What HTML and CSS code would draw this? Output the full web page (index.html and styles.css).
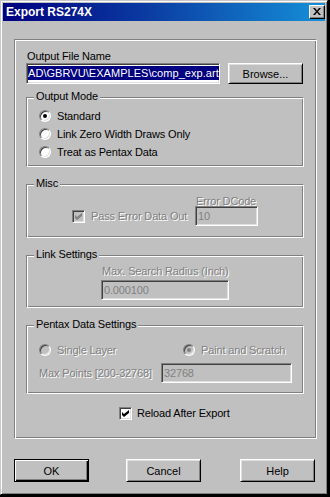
FILE: index.html
```html
<!DOCTYPE html>
<html>
<head>
<meta charset="utf-8">
<link rel="stylesheet" href="styles.css">
</head>
<body>
<div class="window">
  <div class="titlebar">
    <span class="title">Export RS274X</span>
    <span class="close"><svg width="8" height="7" viewBox="0 0 8 7"><path d="M0 0h2l2 2.4 2-2.4h2l-3 3.5 3 3.5h-2l-2-2.4-2 2.4h-2l3-3.5z" fill="#000"/></svg></span>
  </div>
  <div class="etched main">
    <div class="field-label">Output File Name</div>
    <div class="file-row">
      <div class="edit file"><span class="sel">AD\GBRVU\EXAMPLES\comp_exp.art</span></div>
      <div class="btn browse">Browse...</div>
    </div>

    <div class="etched group mode">
      <span class="legend">Output Mode</span>
      <div class="radio-row"><span class="radio checked"></span><span>Standard</span></div>
      <div class="radio-row"><span class="radio"></span><span>Link Zero Width Draws Only</span></div>
      <div class="radio-row"><span class="radio"></span><span>Treat as Pentax Data</span></div>
    </div>

    <div class="etched group misc">
      <span class="legend">Misc</span>
      <div class="misc-row">
        <div class="check-item">
          <span class="check disabled"><svg width="7" height="7" viewBox="0 0 7 7"><path d="M0 2l2 2 5-4v3l-5 4-2-2z" fill="#808080"/></svg></span>
          <span class="dis">Pass Error Data Out</span>
        </div>
        <div class="stack">
          <span class="dis stack-label">Error DCode</span>
          <div class="edit disabled dcode">10</div>
        </div>
      </div>
    </div>

    <div class="etched group link">
      <span class="legend">Link Settings</span>
      <div class="stack link-stack">
        <span class="dis stack-label radius-label">Max. Search Radius (Inch)</span>
        <div class="edit disabled radius">0.000100</div>
      </div>
    </div>

    <div class="etched group pentax">
      <span class="legend">Pentax Data Settings</span>
      <div class="pentax-radios">
        <div class="radio-item first"><span class="radio disabled"></span><span class="dis">Single Layer</span></div>
        <div class="radio-item"><span class="radio disabled checked"></span><span class="dis">Paint and Scratch</span></div>
      </div>
      <div class="points-row">
        <span class="dis points-label">Max Points [200-32768]</span>
        <div class="edit disabled points">32768</div>
      </div>
    </div>

    <div class="reload-row">
      <span class="check"><svg width="7" height="7" viewBox="0 0 7 7"><path d="M0 2l2 2 5-4v3l-5 4-2-2z" fill="#000"/></svg></span>
      <span>Reload After Export</span>
    </div>
  </div>

  <div class="buttons">
    <div class="btn default">OK</div>
    <div class="btn cancel">Cancel</div>
    <div class="btn help">Help</div>
  </div>
</div>
</body>
</html>
```

FILE: styles.css
```css
html, body {
  margin: 0;
  padding: 0;
  background: #000;
}

body {
  width: 330px;
  height: 497px;
  overflow: hidden;
  font-family: "Liberation Sans", Arial, sans-serif;
  font-size: 11px;
  letter-spacing: -0.15px;
  white-space: nowrap;
  color: #000;
}

.window {
  box-sizing: border-box;
  width: 328px;
  height: 495px;
  background: #c0c0c0;
  border: 1px solid;
  border-color: #c8c8c8 #000 #000 #c8c8c8;
  box-shadow: inset 1px 1px #fff, inset -1px -1px #808080;
  padding: 2px;
}

.titlebar {
  height: 18px;
  display: flex;
  align-items: center;
  background: linear-gradient(90deg, #000080 0%, #0b3ca2 45%, #1590d8 100%);
  padding-left: 3px;
}

.title {
  font-weight: bold;
  font-size: 12px;
  letter-spacing: 0;
  color: #fff;
  line-height: 14px;
}

.close {
  margin-left: auto;
  box-sizing: border-box;
  width: 16px;
  height: 14px;
  background: #c0c0c0;
  border: 1px solid;
  border-color: #fff #000 #000 #fff;
  box-shadow: inset -1px -1px #808080;
  display: flex;
  align-items: center;
  justify-content: center;
  padding: 0 1px 1px 0;
}

.close svg { display: block; }

.etched {
  box-sizing: border-box;
  border: 1px solid;
  border-color: #808080 #fff #fff #808080;
  box-shadow: inset 1px 1px #fff, inset -1px -1px #808080;
  position: relative;
}

.main {
  width: 303px;
  height: 400px;
  margin: 18px 0 0 11px;
  padding: 9px 0 0 11px;
}

.field-label {
  line-height: 14px;
  height: 14px;
  margin-left: 1px;
}

.file-row {
  display: flex;
  gap: 8px;
}

.edit {
  box-sizing: border-box;
  border: 1px solid;
  border-color: #808080 #fff #fff #808080;
  box-shadow: inset 1px 1px #404040, inset -1px -1px #dfdfdf;
  background: #fff;
  line-height: 14px;
  padding: 2px 0 0 2px;
  overflow: hidden;
}

.edit.disabled {
  background: #c0c0c0;
  color: #808080;
}

.file {
  width: 194px;
  height: 21px;
  padding: 2px 0 0 1px;
}

.sel {
  display: inline-block;
  background: #000080;
  color: #fff;
  height: 14px;
  line-height: 14px;
  letter-spacing: 0.05px;
  padding-right: 1px;
}

.btn {
  box-sizing: border-box;
  background: #c0c0c0;
  border: 1px solid;
  border-color: #fff #000 #000 #fff;
  box-shadow: inset 1px 1px #dfdfdf, inset -1px -1px #808080;
  display: flex;
  align-items: center;
  justify-content: center;
  line-height: 14px;
  letter-spacing: 0;
}

.browse {
  width: 75px;
  height: 21px;
}

.group {
  width: 278px;
}

.legend {
  position: absolute;
  left: 7px;
  top: -9px;
  padding: 0 2px;
  background: #c0c0c0;
  line-height: 15px;
}

.mode {
  height: 70px;
  margin-top: 13px;
  padding: 9px 0 0 12px;
}

.radio-row, .radio-item {
  display: flex;
  align-items: center;
  gap: 6px;
  height: 18px;
  line-height: 18px;
}

.radio {
  flex: none;
  box-sizing: border-box;
  width: 12px;
  height: 12px;
  border-radius: 50%;
  border: 1px solid;
  border-color: #808080 #fff #fff #808080;
  box-shadow: inset 1px 1px #404040, inset -1px -1px #dfdfdf;
  background: #fff;
  position: relative;
}

.radio.checked::after {
  content: "";
  position: absolute;
  left: 3px;
  top: 3px;
  width: 4px;
  height: 4px;
  border-radius: 50%;
  background: #000;
}

.radio.disabled {
  background: #c0c0c0;
}

.radio.disabled.checked::after {
  background: #808080;
}

.check {
  flex: none;
  box-sizing: border-box;
  width: 13px;
  height: 13px;
  border: 1px solid;
  border-color: #808080 #fff #fff #808080;
  box-shadow: inset 1px 1px #404040, inset -1px -1px #dfdfdf;
  background: #fff;
  display: flex;
  align-items: center;
  justify-content: center;
}

.check svg { display: block; }

.check.disabled {
  background: #c0c0c0;
}

.dis {
  color: #808080;
  text-shadow: 1px 1px 0 #fff;
}

.misc {
  height: 54px;
  margin-top: 17px;
}

.misc-row {
  display: flex;
  align-items: flex-end;
  padding: 10px 0 0 45px;
}

.check-item {
  width: 123px;
  height: 20px;
  display: flex;
  align-items: center;
  gap: 6px;
}

.stack {
  display: flex;
  flex-direction: column;
  align-items: flex-start;
}

.stack-label {
  line-height: 12px;
  height: 12px;
  margin: 0 0 -1px 1px;
}

.dcode {
  width: 63px;
  height: 20px;
}

.link {
  height: 53px;
  margin-top: 17px;
  padding: 9px 0 0 74px;
}

.radius-label {
  margin-bottom: 3px;
}

.radius {
  width: 128px;
  height: 20px;
}

.pentax {
  height: 69px;
  margin-top: 17px;
  padding: 15px 0 0 12px;
}

.pentax-radios {
  display: flex;
}

.radio-item.first {
  width: 144px;
}

.points-row {
  display: flex;
  align-items: center;
  margin-top: 4px;
}

.points-label {
  width: 122px;
  line-height: 15px;
}

.points {
  width: 131px;
  height: 20px;
}

.reload-row {
  display: flex;
  align-items: center;
  gap: 5px;
  height: 18px;
  line-height: 18px;
  margin-top: 10px;
  padding-left: 93px;
}

.buttons {
  display: flex;
  margin: 20px 0 0 11px;
}

.buttons .btn {
  width: 75px;
  height: 23px;
}

.btn.default {
  border: 1px solid #000;
  box-shadow: inset 1px 1px #fff, inset -1px -1px #000, inset -2px -2px #808080;
}

.cancel {
  margin-left: 37px;
}

.help {
  margin-left: 39px;
}
```
